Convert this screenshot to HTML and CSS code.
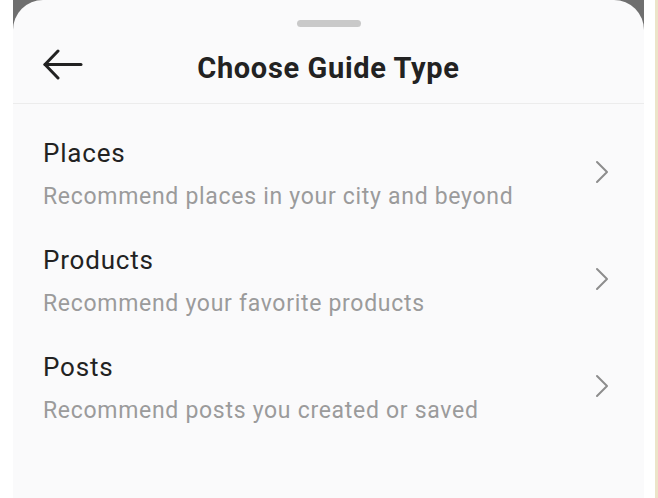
FILE: index.html
```html
<!DOCTYPE html>
<html lang="en">
<head>
<meta charset="utf-8">
<title>Choose Guide Type</title>
<link rel="stylesheet" href="styles.css">
</head>
<body>
  <div class="gutter"></div>
  <div class="screen">
    <div class="sheet">
      <div class="handle"></div>
      <header class="header">
        <button class="back" aria-label="Back">
          <svg width="40" height="32" viewBox="0 0 40 32" fill="none" stroke="#222" stroke-width="3" stroke-linecap="round" stroke-linejoin="round">
            <path d="M2 15.5 H38"/>
            <path d="M15 2 L2 15.5 L15 29"/>
          </svg>
        </button>
        <h1 class="title">Choose Guide Type</h1>
        <div></div>
      </header>
      <ul class="list">
        <li class="row">
          <div class="text">
            <div class="name">Places</div>
            <div class="desc">Recommend places in your city and beyond</div>
          </div>
          <svg class="chev" width="16" height="24" viewBox="0 0 16 24" fill="none" stroke="#8d8d8d" stroke-width="2" stroke-linecap="round" stroke-linejoin="round"><path d="M3 2 L13 12 L3 22"/></svg>
        </li>
        <li class="row">
          <div class="text">
            <div class="name">Products</div>
            <div class="desc">Recommend your favorite products</div>
          </div>
          <svg class="chev" width="16" height="24" viewBox="0 0 16 24" fill="none" stroke="#8d8d8d" stroke-width="2" stroke-linecap="round" stroke-linejoin="round"><path d="M3 2 L13 12 L3 22"/></svg>
        </li>
        <li class="row">
          <div class="text">
            <div class="name">Posts</div>
            <div class="desc">Recommend posts you created or saved</div>
          </div>
          <svg class="chev" width="16" height="24" viewBox="0 0 16 24" fill="none" stroke="#8d8d8d" stroke-width="2" stroke-linecap="round" stroke-linejoin="round"><path d="M3 2 L13 12 L3 22"/></svg>
        </li>
      </ul>
    </div>
  </div>
  <div class="gap"></div>
  <div class="edge"></div>
</body>
</html>
```

FILE: styles.css
```css
html, body {
  margin: 0;
  padding: 0;
  height: 498px;
  overflow: hidden;
  background: #ffffff;
}
body {
  display: flex;
  font-family: Roboto, "Liberation Sans", sans-serif;
}
.gutter {
  width: 13px;
  flex: none;
}
.screen {
  width: 631px;
  flex: none;
  background: #6f6f6f;
}
.gap {
  width: 11px;
  flex: none;
}
.edge {
  width: 3px;
  flex: none;
  background: #ece4c9;
}
.sheet {
  height: 100%;
  background: #fafafb;
  border-radius: 30px 30px 0 0;
  display: flex;
  flex-direction: column;
}
.handle {
  width: 64px;
  height: 7px;
  border-radius: 4px;
  background: #c9c9c9;
  margin: 20px auto 0;
}
.header {
  height: 76px;
  display: grid;
  grid-template-columns: 1fr auto 1fr;
  align-items: center;
  border-bottom: 1px solid #ececec;
}
.back {
  justify-self: start;
  margin-left: 30px;
  padding: 0;
  border: 0;
  background: none;
  display: flex;
}
.title {
  margin: 5px 0 0;
  font-size: 29px;
  font-weight: 700;
  color: #222;
  letter-spacing: 0.65px;
}
.list {
  list-style: none;
  margin: 0;
  padding: 17px 0 0;
}
.row {
  display: flex;
  align-items: center;
  padding: 17px 34px 16px 30px;
}
.text {
  flex: 1;
}
.name {
  font-size: 26px;
  line-height: 30px;
  color: #222;
  letter-spacing: 0.8px;
}
.desc {
  font-size: 23px;
  line-height: 30px;
  margin-top: 14px;
  color: #9b9b9b;
  letter-spacing: 0.7px;
}
.chev {
  flex: none;
  margin-bottom: 6px;
}
```
